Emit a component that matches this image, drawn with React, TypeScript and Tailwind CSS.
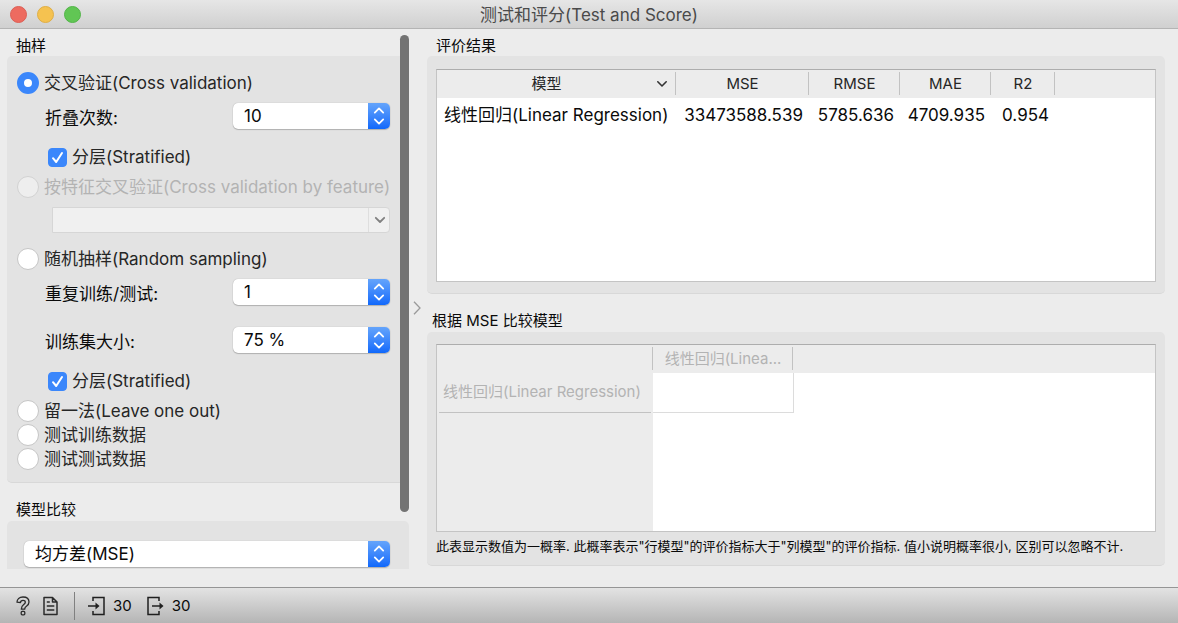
import { useState, type ReactNode } from 'react';

const results = [
  { model: '线性回归(Linear Regression)', mse: '33473588.539', rmse: '5785.636', mae: '4709.935', r2: '0.954' },
];

function GroupBox({ title, children, className = '' }: { title: string; children: ReactNode; className?: string }) {
  return (
    <fieldset aria-label={title} className={`flex min-w-0 flex-col bg-[#e3e3e3] ${className}`}>
      {children}
    </fieldset>
  );
}

function Radio({ id, label, checked, disabled, className = '', onSelect }: {
  id: string; label: string; checked: boolean; disabled?: boolean; className?: string; onSelect: (id: string) => void;
}) {
  return (
    <label htmlFor={id} className={`flex h-6 items-center gap-[5px] whitespace-nowrap ${disabled ? 'text-[#b3b3b3]' : 'text-[#262626]'} ${className}`}>
      <input
        id={id}
        type="radio"
        name="sampling"
        checked={checked}
        disabled={disabled}
        onChange={() => onSelect(id)}
        className="size-[22px] shrink-0 appearance-none rounded-full border border-[#c6c6c6] bg-white checked:border-[7px] checked:border-[#3b87fb] disabled:border-[#d2d2d2] disabled:bg-[#eeeeee]"
      />
      {label}
    </label>
  );
}

function Check({ id, label }: { id: string; label: string }) {
  const [on, setOn] = useState(true);
  return (
    <label htmlFor={id} className="mt-4 ml-[31px] flex h-6 items-center gap-[5px] text-[#262626]">
      <span className="grid size-[19px] place-items-center">
        <input
          id={id}
          type="checkbox"
          checked={on}
          onChange={() => setOn(!on)}
          className="col-start-1 row-start-1 size-[19px] appearance-none rounded-[4px] border border-[#c6c6c6] bg-white checked:border-[#3b87fb] checked:bg-[#3b87fb]"
        />
        {on && (
          <svg viewBox="0 0 19 19" className="pointer-events-none col-start-1 row-start-1 size-[19px]" fill="none" stroke="white" strokeWidth="2" strokeLinecap="round" strokeLinejoin="round">
            <path d="M5 10.2 8.2 14 14 5" />
          </svg>
        )}
      </span>
      {label}
    </label>
  );
}

const field = 'h-[26px] rounded-[5px] bg-white shadow-[0_1px_1px_rgba(0,0,0,0.2),0_0_1px_rgba(0,0,0,0.3)]';
const stepper = 'w-[22px] shrink-0 rounded-r-[5px] bg-gradient-to-b from-[#64a4fb] to-[#0f68fb]';

function Spin({ id, label, initial, suffix = '', className = '' }: {
  id: string; label: string; initial: number; suffix?: string; className?: string;
}) {
  const [value, setValue] = useState(initial);
  return (
    <div className={`ml-7 flex h-[26px] items-center justify-between ${className}`}>
      <label htmlFor={id} className="pt-1">{label}</label>
      <div className={`flex w-[157px] ${field}`}>
        <input
          id={id}
          value={`${value}${suffix}`}
          onChange={(e) => setValue(parseInt(e.target.value, 10) || 0)}
          className="min-w-0 flex-1 bg-transparent pl-[11px] outline-none"
        />
        <span className={`flex flex-col ${stepper}`}>
          <button type="button" aria-label={`${label} +`} onClick={() => setValue(value + 1)} className="flex flex-1 items-end justify-center pb-[2px]">
            <svg viewBox="0 0 12 7" className="h-[7px] w-3" fill="none" stroke="white" strokeWidth="1.8" strokeLinecap="round" strokeLinejoin="round"><path d="M1.8 5.6 6 1.4l4.2 4.2" /></svg>
          </button>
          <button type="button" aria-label={`${label} -`} onClick={() => setValue(value - 1)} className="flex flex-1 items-start justify-center pt-[2px]">
            <svg viewBox="0 0 12 7" className="h-[7px] w-3" fill="none" stroke="white" strokeWidth="1.8" strokeLinecap="round" strokeLinejoin="round"><path d="M1.8 1.400 6 5.600l4.200-4.200" /></svg>
          </button>
        </span>
      </div>
    </div>
  );
}

export default function App() {
  const [method, setMethod] = useState('cv');
  const th = 'relative p-0 text-center font-normal';
  const heading = 'text-[15px] leading-5';
  const divider = <span className="absolute top-[2px] right-0 bottom-[3px] w-px bg-[#c2c2c2]" />;

  return (
    <div className="flex min-h-screen flex-col bg-[#ececec] font-[Inter,'Noto_Sans_CJK_SC',sans-serif] text-[17px] leading-6 text-[#0a0a0a]">
      <header className="flex h-[29px] shrink-0 items-center border-b border-[#b4b4b4] bg-gradient-to-b from-[#e6e6e6] to-[#d0d0d0] px-[10px]">
        <div className="flex flex-1 gap-[10px]">
          <button type="button" aria-label="关闭" className="size-[17px] rounded-full border border-[#dc5f55] bg-[#ed6b60]" />
          <button type="button" aria-label="最小化" className="size-[17px] rounded-full border border-[#dfae45] bg-[#f5c250]" />
          <button type="button" aria-label="缩放" className="size-[17px] rounded-full border border-[#52b548] bg-[#61c654]" />
        </div>
        <h1 className="pt-[2px] text-[#4a4a4a]">测试和评分(Test and Score)</h1>
        <div className="flex-1" />
      </header>

      <main className="flex flex-1">
        <aside className="relative w-[409px] shrink-0 pl-[7px]">
          <h2 className={`pt-[7px] pl-[9px] ${heading}`}>抽样</h2>
          <GroupBox title="抽样" className="rounded-[5px] border-b border-[#d8d8d8] pt-[15px] pr-[19px] pb-[11px] pl-[10px]">
            <Radio id="cv" label="交叉验证(Cross validation)" checked={method === 'cv'} onSelect={setMethod} />
            <Spin id="folds" label="折叠次数:" initial={10} className="mt-2" />
            <Check id="strat-cv" label="分层(Stratified)" />
            <Radio id="cvf" label="按特征交叉验证(Cross validation by feature)" checked={false} disabled className="mt-[6px]" onSelect={setMethod} />
            <div className="mt-2 ml-[35px] grid h-[26px] items-center">
              <select disabled aria-label="按特征交叉验证" className="col-start-1 row-start-1 h-[26px] w-full appearance-none rounded-r-[4px] border border-[#d6d6d6] bg-[#f0f0f0]" />
              <span className="pointer-events-none col-start-1 row-start-1 flex h-6 w-[22px] items-center justify-center justify-self-end border-l border-[#dedede]">
                <svg viewBox="0 0 12 8" className="h-2 w-3" fill="none" stroke="#808080" strokeWidth="1.8" strokeLinecap="round" strokeLinejoin="round"><path d="M1.8 1.8 6 6l4.2-4.2" /></svg>
              </span>
            </div>
            <Radio id="random" label="随机抽样(Random sampling)" checked={method === 'random'} className="mt-[14px]" onSelect={setMethod} />
            <Spin id="repeat" label="重复训练/测试:" initial={1} className="mt-2" />
            <Spin id="size" label="训练集大小:" initial={75} suffix=" %" className="mt-[22px]" />
            <Check id="strat-rs" label="分层(Stratified)" />
            <Radio id="loo" label="留一法(Leave one out)" checked={method === 'loo'} className="mt-[6px]" onSelect={setMethod} />
            <Radio id="train" label="测试训练数据" checked={method === 'train'} onSelect={setMethod} />
            <Radio id="test" label="测试测试数据" checked={method === 'test'} onSelect={setMethod} />
          </GroupBox>

          <h2 className={`pt-[17px] pb-px pl-[9px] ${heading}`}>模型比较</h2>
          <GroupBox title="模型比较" className="rounded-t-[5px] pt-5 pr-[19px] pb-[2px] pl-[17px]">
            <div className={`grid ${field}`}>
              <select aria-label="模型比较" className="col-start-1 row-start-1 w-full appearance-none bg-transparent pl-[11px] outline-none">
                <option>均方差(MSE)</option>
              </select>
              <span className={`pointer-events-none col-start-1 row-start-1 flex items-center justify-center justify-self-end ${stepper}`}>
                <svg viewBox="0 0 12 18" className="h-[18px] w-3" fill="none" stroke="white" strokeWidth="1.8" strokeLinecap="round" strokeLinejoin="round"><path d="M1.8 5.600 6 1.400l4.200 4.200M1.800 12.400 6 16.600l4.200-4.200" /></svg>
              </span>
            </div>
          </GroupBox>
          <div className="absolute top-[6px] right-0 h-[477px] w-[9px] rounded-full bg-[#737373]" />
        </aside>

        <div className="flex w-[18px] shrink-0 items-center justify-center pr-[2px]">
          <svg viewBox="0 0 8 14" className="h-[14px] w-2" fill="none" stroke="#9a9a9a" strokeWidth="1.3"><path d="M1 .8 7 7l-6 6.2" /></svg>
        </div>

        <div className="flex min-w-0 flex-1 flex-col pr-[13px] pb-[21px]">
          <h2 className={`pt-[7px] pl-[9px] ${heading}`}>评价结果</h2>
          <section className="flex flex-1 rounded-[5px] border-b border-[#d8d8d8] bg-[#e3e3e3] px-[9px] pt-[13px] pb-[11px]">
            <div className="flex-1 border border-[#c4c4c4] border-t-[#adadad] bg-white">
              <table className="w-full table-fixed border-collapse whitespace-nowrap">
                <colgroup>
                  <col className="w-[239px]" /><col className="w-[133px]" /><col className="w-[91px]" /><col className="w-[91px]" /><col className="w-[64px]" /><col />
                </colgroup>
                <thead>
                  <tr className="h-7 bg-[#ececec] text-[15px] text-[#262626]">
                    <th className={th}>
                      <button type="button" className="flex w-full items-center pr-2">
                        <span className="flex-1">模型</span>
                        <svg viewBox="0 0 12 8" className="h-2 w-3" fill="none" stroke="#333333" strokeWidth="1.6" strokeLinecap="round" strokeLinejoin="round"><path d="M1.8 1.8 6 6l4.2-4.2" /></svg>
                      </button>
                      {divider}
                    </th>
                    <th className={th}>MSE{divider}</th>
                    <th className={th}>RMSE{divider}</th>
                    <th className={th}>MAE{divider}</th>
                    <th className={th}>R2{divider}</th>
                    <td />
                  </tr>
                </thead>
                <tbody>
                  {results.map((r) => (
                    <tr key={r.model} className="h-[34px]">
                      <td className="p-0 pl-[7px]">{r.model}</td>
                      <td className="p-0 pr-[6px] text-right">{r.mse}</td>
                      <td className="p-0 pr-[6px] text-right">{r.rmse}</td>
                      <td className="p-0 pr-[6px] text-right">{r.mae}</td>
                      <td className="p-0 pr-[6px] text-right">{r.r2}</td>
                      <td />
                    </tr>
                  ))}
                </tbody>
              </table>
            </div>
          </section>

          <h2 className={`pt-[17px] pb-px pl-[5px] ${heading}`}>根据 MSE 比较模型</h2>
          <section className="flex flex-1 flex-col rounded-[5px] border-b border-[#d8d8d8] bg-[#e3e3e3] px-[9px] pt-3 pb-[9px]">
            <div className="flex flex-1 border border-[#c4c4c4] border-t-[#adadad] bg-white">
              <table className="w-full table-fixed border-collapse text-[15px] whitespace-nowrap text-[#b3b3b3]">
                <colgroup><col className="w-[216px]" /><col className="w-[140px]" /><col /></colgroup>
                <thead>
                  <tr className="h-7 bg-[#ececec]">
                    <td className="relative p-0">{divider}</td>
                    <th className={th}>线性回归(Linea...{divider}</th>
                    <td />
                  </tr>
                </thead>
                <tbody>
                  <tr className="h-10">
                    <th className="bg-[#ececec] px-[2px] py-0 text-left font-normal"><span className="flex h-10 items-center border-b border-[#c2c2c2] pl-1">线性回归(Linear Regression)</span></th>
                    <td className="border-r border-b border-[#dcdcdc] p-0" />
                    <td />
                  </tr>
                  <tr><td className="bg-[#ececec]" /><td /><td /></tr>
                </tbody>
              </table>
            </div>
            <p className="pt-1 text-[13px] leading-5">此表显示数值为一概率. 此概率表示"行模型"的评价指标大于"列模型"的评价指标. 值小说明概率很小, 区别可以忽略不计.</p>
          </section>
        </div>
      </main>

      <footer className="flex h-9 shrink-0 items-center border-t border-[#959595] bg-gradient-to-b from-[#e3e3e3] to-[#b5b5b5] pl-4 text-[15px]">
        <button type="button" aria-label="帮助" className="mr-3">
          <svg viewBox="0 0 14 20" className="h-5 w-[14px]" fill="none" stroke="#2b2b2b" strokeWidth="1.300" strokeLinejoin="round">
            <path d="M1 6.200C1 3 3.400 1 7 1s6 1.900 6 5c0 2.300-1.200 3.300-2.600 4.300-1.200.8-1.700 1.300-1.700 2.900H5.300c0-2.700 1-3.700 2.400-4.700 1-.7 1.600-1.200 1.600-2.300C9.300 4.900 8.400 4.300 7 4.300S4.600 5 4.500 6.500Z" />
            <rect x="5.200" y="15.400" width="3.600" height="3.400" rx="1" />
          </svg>
        </button>
        <button type="button" aria-label="报告">
          <svg viewBox="0 0 16 20" className="h-5 w-[17px]" fill="none" stroke="#2b2b2b" strokeWidth="1.500" strokeLinejoin="round">
            <path d="M1.500 1.500h8.500L14.500 6v12.500h-13ZM10 1.500V6h4.500M4.300 6h3M4.300 10h7.500M4.300 14h7.500" />
          </svg>
        </button>
        <span className="mr-[13px] ml-[15px] h-7 w-px bg-[#808080]" />
        <button type="button" aria-label="输入 30" className="mr-[15px] flex items-center gap-2">
          <svg viewBox="0 0 17 20" className="h-5 w-[17px]" fill="none" stroke="#1f1f1f" strokeWidth="1.500">
            <path d="M5 5V1.500h11v17H5V15" /><path d="M0 10h8" /><path d="m7.500 6.600 4 3.400-4 3.400Z" fill="#1f1f1f" stroke="none" />
          </svg>
          30
        </button>
        <button type="button" aria-label="输出 30" className="flex items-center gap-2">
          <svg viewBox="0 0 17 20" className="h-5 w-[17px]" fill="none" stroke="#1f1f1f" strokeWidth="1.500">
            <path d="M12 5V1.500H1v17h11V15" /><path d="M5 10h8" /><path d="m12.500 6.600 4 3.400-4 3.400Z" fill="#1f1f1f" stroke="none" />
          </svg>
          30
        </button>
      </footer>
    </div>
  );
}
